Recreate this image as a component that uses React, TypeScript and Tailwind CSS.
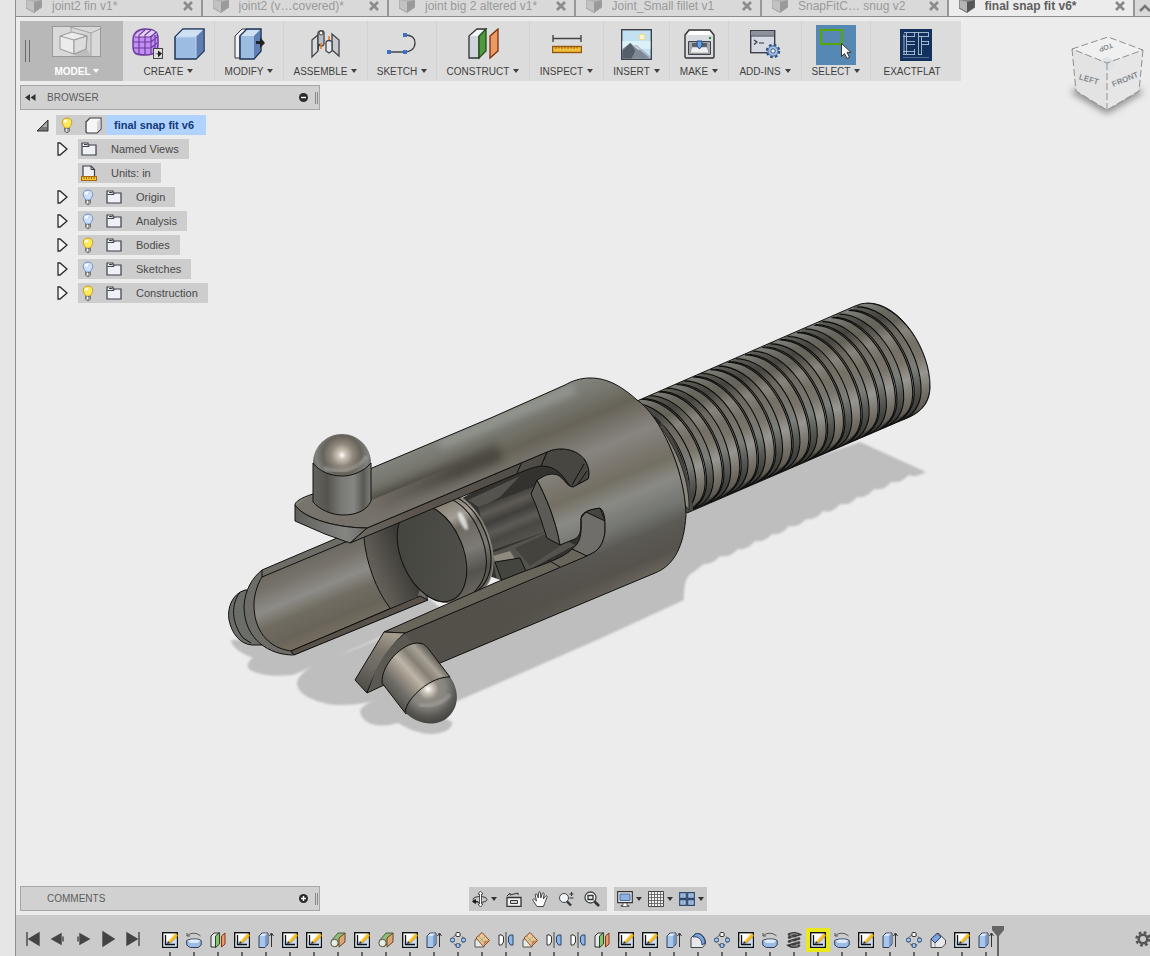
import React from "react";

type SvgProps = {
  w: number;
  h: number;
  children: React.ReactNode;
};

const Svg: React.FC<SvgProps> = ({ w, h, children }) => (
  <svg width={w} height={h} viewBox={`0 0 ${w} ${h}`} fill="none" aria-hidden="true" className="block shrink-0">
    {children}
  </svg>
);

const Caret: React.FC = () => (
  <Svg w={6} h={4}>
    <path d="M0 0h6L3 4z" fill="currentColor" />
  </Svg>
);

/* ---------- document tabs ---------- */

const tabs = [
  { name: "joint2 fin v1*" },
  { name: "joint2 (v…covered)*" },
  { name: "joint big 2 altered v1*" },
  { name: "Joint_Small fillet v1" },
  { name: "SnapFitC… snug v2" },
  { name: "final snap fit v6*", active: true },
];

const TabCube: React.FC<{ active?: boolean }> = ({ active }) => (
  <Svg w={16} h={13}>
    <path d="M0 0h16v7L8 12.500 0 8z" fill={active ? "#8a8a8a" : "#b4b4b4"} />
    <path d="M0 0l8 2v10.500L0 8z" fill={active ? "#b5b5b5" : "#c2c2c2"} />
    <path d="M8 2l8-2v7l-8 5.500z" fill={active ? "#555" : "#9a9a9a"} />
    <path d="M0 0v8l8 4.500L16 7V0" stroke={active ? "#6a6a6a" : "#a2a2a2"} />
  </Svg>
);

const DocumentTabs: React.FC = () => (
  <div className="flex h-[17px] border-b border-[#8e8e8e] bg-[#d9d9d9]">
    {tabs.map((tab) => (
      <div
        key={tab.name}
        className={`flex min-w-0 flex-1 items-start border-r-2 border-[#979797] pl-[10px] pr-2 ${
          tab.active ? "bg-[#ececec]" : "bg-[#d9d9d9]"
        }`}
      >
        <TabCube active={tab.active} />
        <button
          className={`ml-[10px] flex-1 truncate text-left text-[12px] leading-[13px] ${
            tab.active ? "font-bold text-[#5f5f5f]" : "text-[#9a9a9a]"
          }`}
        >
          {tab.name}
        </button>
        <button aria-label={`Close ${tab.name}`} className="pt-px">
          <Svg w={10} h={10}>
            <path d="M1 1l8 8M9 1L1 9" stroke={tab.active ? "#888" : "#8c8c8c"} strokeWidth="2.600" />
          </Svg>
        </button>
      </div>
    ))}
    <button aria-label="More tabs" className="w-[15px] pl-1 pt-px">
      <Svg w={11} h={9}>
        <path d="M1 7l5-5 5 5" stroke="#777" strokeWidth="2.500" />
      </Svg>
    </button>
  </div>
);

/* ---------- ribbon ---------- */

const ModelIcon = (
  <Svg w={49} h={31}>
    <rect x="0.500" y="0.500" width="48" height="30" fill="#d9d9d9" stroke="#999" />
    <path d="M19 1v6M19 7l20 0v23H19z" fill="#d2d2d2" />
    <path d="M19 1v6M18 1l21 6 9-4M39 7v23" stroke="#a2a2a2" />
    <path d="M22 28l13-5 4 7H24z" fill="#bdbdbd" />
    <path d="M8 10l12-4 15 4-1 13-12 5-14-5z" fill="#ececec" stroke="#999" />
    <path d="M8 10l14 4 13-4M22 14v14" stroke="#999" />
    <path d="M22 14l13-4-1 13-12 5z" fill="#dcdcdc" stroke="#999" />
  </Svg>
);

const FormIcon = (
  <Svg w={31} h={32}>
    <path d="M1 12C1 5 6 1 13 1c8 0 13 2 13 9v7c0 7-4 10-12 10C4 27 1 26 1 18z" fill="#c48ff5" stroke="#6b3d9c" strokeWidth="1.500" />
    <path d="M3 9c3-6 8-7 13-7 5 0 8 2 9 4-5 3-14 3-22 3z" fill="#e6cff8" />
    <path d="M1 14h18l6-5M1 20h18l6-5M3 9h15l7-5M7 7v19M13 7v20M19 9v17M7 7l6-5M13 7l6-5M19 9l5-5M23 7v17" stroke="#6b3d9c" strokeWidth="1.200" />
    <rect x="21.500" y="20.500" width="9" height="10" fill="#ddd" stroke="#444" />
    <path d="M23 25.500h3v-3l4 3-4 4v-3" fill="#222" />
  </Svg>
);

const BoxIcon = (
  <Svg w={31} h={32}>
    <path d="M1 9l8-8h21v22l-8 8H1z" fill="#9dbce2" stroke="#1d3558" strokeWidth="1.500" />
    <path d="M1.700 9L9 1.700h20L22 9z" fill="#cfe0f2" />
    <path d="M22 9l7.300-7.300v21L22 30z" fill="#5d7cb0" />
    <path d="M2 9h20v21" stroke="#bdd3ee" />
  </Svg>
);

const ModifyIcon = (
  <Svg w={31} h={32}>
    <path d="M1 8l7-7h5L6 8v22H1z" fill="#f2f2f2" stroke="#333" />
    <path d="M6 8l7-7h14v22l-7 8H6z" fill="#9dbce2" stroke="#1d3558" strokeWidth="1.500" />
    <path d="M7 8l6-6h13l-6 6z" fill="#cfe0f2" />
    <path d="M20 8l6-6v21l-6 7z" fill="#6080b3" />
    <path d="M22 13h4V9l5 6-5 5v-4h-4z" fill="#222" />
  </Svg>
);

const AssembleIcon = (
  <Svg w={29} h={32}>
    <path d="M1 12l6-5v16l-6 6z" fill="#d8dbe1" stroke="#444" strokeWidth="1.300" />
    <path d="M7 5c1-3 6-3 6 0v11c-1 3-4 3-5 0L7 22z" fill="#b9bec8" stroke="#444" strokeWidth="1.300" />
    <circle cx="10" cy="5" r="2" fill="#eee" stroke="#444" />
    <path d="M10 15v6M18 8v6" stroke="#e57a1f" strokeWidth="1.500" />
    <path d="M21 6l7 6v16l-7-6z" fill="#c6cad3" stroke="#444" strokeWidth="1.300" />
    <path d="M15 14c1-2 5-2 6 0v9l-3 2-3-2z" fill="#e5e7eb" stroke="#444" strokeWidth="1.300" />
  </Svg>
);

const SketchIcon = (
  <Svg w={31} h={24}>
    <path d="M2 20h16c5 0 10-3 10-9s-5-8-10-8" stroke="#444" strokeWidth="1.400" />
    <path d="M0 18h4v4H0zM16 18h4v4h-4zM16 1h4v4h-4z" fill="#3d6fd1" />
  </Svg>
);

const ConstructIcon = (
  <Svg w={31} h={32}>
    <path d="M1 8l8-7h9l-7 7v22H1z" fill="#d0d5de" stroke="#333" strokeWidth="1.300" />
    <path d="M2 8l7-6h8l-6 6z" fill="#f5f6f8" />
    <path d="M11 8l7-7v22l-7 7z" fill="#4f9a3f" stroke="#234f1b" strokeWidth="1.300" />
    <path d="M22 8l8-7v22l-8 7z" fill="#ec9a63" stroke="#7c2e0b" strokeWidth="1.300" />
  </Svg>
);

const InspectIcon = (
  <Svg w={30} h={22}>
    <path d="M1 5.500h28M1 2v7M29 2v7" stroke="#444" strokeWidth="1.400" />
    <rect x="0.500" y="13.500" width="29" height="6" fill="#f0bf3c" stroke="#94570c" strokeWidth="1.400" />
    <path d="M4 14v2M7 14v1.500M10 14v2M13 14v1.500M16 14v2M19 14v1.500M22 14v2M25 14v1.500" stroke="#94570c" />
  </Svg>
);

const InsertIcon = (
  <Svg w={31} h={31}>
    <rect x="0.700" y="0.700" width="29.600" height="29.600" fill="#c2e2f3" stroke="#3c4049" strokeWidth="1.400" />
    <path d="M1.400 12h28v8h-28z" fill="#dcf0f8" />
    <circle cx="21" cy="8" r="3" fill="#fff6cf" stroke="#f3d675" />
    <path d="M1.400 20l8-6 8 7 3-1 9 8v1.500h-28z" fill="#7f8896" />
    <path d="M1.400 22l8-8 5 8-4 7.500h-9z" fill="#565d6a" />
    <path d="M13 16l3 0 13 12v1.500z" fill="#b6bcc6" />
  </Svg>
);

const MakeIcon = (
  <Svg w={31} h={30}>
    <path d="M1 6l4-5h21l4 5v22l-1 1H2l-1-1z" fill="#d9dce2" stroke="#333" strokeWidth="1.400" />
    <path d="M3 6l3-4h19l3 4z" fill="#fff" />
    <rect x="25" y="8" width="2" height="2" fill="#178a17" />
    <path d="M4.500 12.500h22v13h-22z" fill="#a4a9b3" stroke="#444" />
    <path d="M8 14h15v6H8z" fill="#5c6068" />
    <path d="M8 18h15l2 6H6z" fill="#eee" stroke="#777" strokeWidth="0.500" />
    <path d="M13 12h5v5l-2.500 3-2.500-3z" fill="#67a5e0" stroke="#224a7c" />
  </Svg>
);

const AddInsIcon = (
  <Svg w={31} h={30}>
    <rect x="0.700" y="1.700" width="24" height="22" fill="#d5d9e2" stroke="#3c4049" strokeWidth="1.400" />
    <path d="M1.400 2.400h22.600v4H1.400z" fill="#8c919c" />
    <path d="M1 7h23" stroke="#3c4049" />
    <path d="M4 11l3 2-3 2.500M9 14h5" stroke="#333" strokeWidth="1.200" />
    <circle cx="23" cy="22" r="6" fill="#a9c3e6" stroke="#2f4e7e" strokeWidth="2.500" strokeDasharray="2.600 2.100" />
    <circle cx="23" cy="22" r="5" fill="#a9c3e6" stroke="#5475a6" />
    <circle cx="23" cy="22" r="2.200" fill="#fff" stroke="#2f4e7e" />
  </Svg>
);

const SelectIcon = (
  <Svg w={40} h={40}>
    <path d="M0 0h40v40H0z" fill="#5688b4" />
    <path d="M5 5h21v14H5z" stroke="#58a600" strokeWidth="2" />
    <path d="M25.500 18.500v13l3-3 2.500 5 2.500-1.200-2.500-5h4z" fill="#fff" stroke="#333" />
  </Svg>
);

const ExactFlatIcon = (
  <Svg w={32} h={32}>
    <path d="M0 0h32v32H0z" fill="#12315c" />
    <path
      d="M4 3.500h24M4 5v20M6.500 4v21M3 7.500h12M7 12.500h8M7 15.500h8M3 22.500h12M3 25.500h12M14.500 3v5M14.500 20v6M18.500 3v23M21.500 7v19M18 7.500h11M22 12.500h7M22 15.500h7M18 25.500h4M28.500 3v5M28.500 12v4"
      stroke="#b9c9de"
      strokeOpacity="0.850"
    />
    <path d="M3 28.500h26" stroke="#4b6c96" />
  </Svg>
);

const ribbon = [
  { label: "CREATE", width: "w-[92px]", icons: [FormIcon, BoxIcon] },
  { label: "MODIFY", width: "w-[69px]", icons: [ModifyIcon] },
  { label: "ASSEMBLE", width: "w-[84px]", icons: [AssembleIcon] },
  { label: "SKETCH", width: "w-[69px]", icons: [SketchIcon] },
  { label: "CONSTRUCT", width: "w-[93px]", icons: [ConstructIcon] },
  { label: "INSPECT", width: "w-[74px]", icons: [InspectIcon] },
  { label: "INSERT", width: "w-[66px]", icons: [InsertIcon] },
  { label: "MAKE", width: "w-[59px]", icons: [MakeIcon] },
  { label: "ADD-INS", width: "w-[73px]", icons: [AddInsIcon] },
  { label: "SELECT", width: "w-[69px]", icons: [SelectIcon] },
];

const Ribbon: React.FC = () => (
  <div className="flex h-15 w-fit bg-[#dcdcdc] text-[10px] text-[#3f3f3f]">
    <div className="flex w-[103px] items-center bg-[#b8b8b8] pl-[5px]">
      <span className="h-[22px] w-[5px] border-x border-[#6a6a6a]" />
      <button className="flex flex-1 flex-col items-center font-bold text-white">
        <span className="flex h-10 items-center">{ModelIcon}</span>
        <span className="flex h-5 items-center gap-[2px]">
          MODEL
          <Caret />
        </span>
      </button>
    </div>
    {ribbon.map((group) => (
      <button key={group.label} className={`flex flex-col items-center border-r border-[#d2d2d2] ${group.width}`}>
        <span className={`flex h-10 items-center gap-[11px] ${group.label === "SELECT" ? "pt-[8px]" : "pt-[6px]"}`}>
          {group.icons.map((icon, i) => (
            <React.Fragment key={i}>{icon}</React.Fragment>
          ))}
        </span>
        <span className="flex h-5 items-center gap-1">
          {group.label}
          <Caret />
        </span>
      </button>
    ))}
    <button className="flex w-[90px] flex-col items-center">
      <span className="flex h-10 items-center pt-2">{ExactFlatIcon}</span>
      <span className="flex h-5 items-center pr-2">EXACTFLAT</span>
    </button>
  </div>
);

/* ---------- browser tree ---------- */

const Bulb: React.FC<{ on?: boolean }> = ({ on }) => (
  <Svg w={12} h={16}>
    <path
      d="M6 1c3 0 4.800 2 4.800 4.500C10.800 8 8.500 9 8.500 11h-5C3.500 9 1.200 8 1.200 5.500 1.200 3 3 1 6 1z"
      fill={on ? "#ffe95c" : "#cfe0fb"}
      stroke={on ? "#c79a1c" : "#7390c2"}
    />
    <circle cx="4.500" cy="4" r="1.500" fill="#fff" />
    <path d="M3.500 11.500h5v2.500l-1.500 1.500H5L3.500 14z" fill="#a5a5a5" stroke="#555" strokeWidth="0.700" />
    <path d="M5.500 11.500v3" stroke="#eee" />
  </Svg>
);

const Folder: React.FC = () => (
  <Svg w={16} h={14}>
    <path d="M1 13V1h6v2h8v10z" fill="#eef0f3" stroke="#3a3f4a" strokeWidth="1.200" />
    <path d="M1.500 4.500h6L8.500 3M3 2.500h3" stroke="#3a3f4a" strokeWidth="1.100" />
  </Svg>
);

const UnitsIcon: React.FC = () => (
  <Svg w={16} h={16}>
    <path d="M2 12V1h8l3.500 3.500V12" fill="#eef0f3" stroke="#3a3f4a" strokeWidth="1.200" />
    <path d="M10 1v3.500h3.500" stroke="#3a3f4a" />
    <rect x="0.500" y="11.500" width="15" height="4" fill="#f4c534" stroke="#a8690f" />
    <path d="M3 12v2M5.500 12v2M8 12v2M10.500 12v2M13 12v2" stroke="#a8690f" />
  </Svg>
);

const Expander: React.FC = () => (
  <Svg w={11} h={14}>
    <path d="M1 1h2l7 6-7 6H1z" fill="#f5f5f5" stroke="#2b2b2b" strokeWidth="1.300" />
  </Svg>
);

const treeRows = [
  { name: "Named Views", kind: "folder" },
  { name: "Units: in", kind: "units" },
  { name: "Origin", kind: "off" },
  { name: "Analysis", kind: "off" },
  { name: "Bodies", kind: "on" },
  { name: "Sketches", kind: "off" },
  { name: "Construction", kind: "on" },
];

const PanelHeader: React.FC<{ title: string; open: boolean }> = ({ title, open }) => (
  <div className="flex h-[25px] w-75 items-center border border-[#a6a6a6] bg-[#d1d1d1] pr-px text-[10px] text-[#5c5c5c]">
    <span className="w-[26px] pl-1">
      {open && (
        <Svg w={11} h={7}>
          <path d="M5 0v7L0 3.500zM10.500 0v7l-5-3.500z" fill="#333" />
        </Svg>
      )}
    </span>
    <span className="flex-1">{title}</span>
    <button aria-label={open ? `Collapse ${title}` : `Expand ${title}`}>
      <Svg w={9} h={9}>
        <circle cx="4.500" cy="4.500" r="4.500" fill="#2c2c2c" />
        <path d={open ? "M2 4.500h5" : "M2 4.500h5M4.500 2v5"} stroke="#fff" strokeWidth="1.400" />
      </Svg>
    </button>
    <span className="ml-[7px] h-3 w-[3px] border-x border-[#888]" />
  </div>
);

const BrowserTree: React.FC = () => (
  <ul className="mt-[5px] flex w-75 flex-col gap-1 text-[11px] text-[#4a4a4a]">
    <li className="flex h-5 items-center pl-4">
      <button aria-label="Collapse root" className="w-5">
        <Svg w={13} h={13}>
          <path d="M12 1v11H1z" fill="#777" stroke="#333" />
          <path d="M11 3v5H6z" fill="#aaa" />
        </Svg>
      </button>
      <span className="flex h-5 w-[50px] items-center justify-between bg-[#cdcdcd] pl-[5px] pr-1">
        <Bulb on />
        <Svg w={17} h={17}>
          <path d="M1 5l4-4h11v11l-4 4H2l-1-1z" fill="#f6f6f6" stroke="#3a3f4a" strokeWidth="1.200" />
          <path d="M12 5l3.500-3.500V12L12 15.500z" fill="#d5d5d9" />
        </Svg>
      </span>
      <span className="flex h-5 items-center bg-[#b0d2ff] pl-2 pr-3 font-bold text-[#123a78]">final snap fit v6</span>
    </li>
    {treeRows.map((row) => (
      <li key={row.name} className="flex h-5 items-center pl-[37px]">
        <span className="w-[21px]">
          {row.kind !== "units" && (
            <button aria-label={`Expand ${row.name}`} className="block">
              <Expander />
            </button>
          )}
        </span>
        <span className="flex h-5 items-center bg-[#cdcdcd] pr-[10px]">
          {row.kind === "folder" && <span className="w-[33px] pl-[3px]"><Folder /></span>}
          {row.kind === "units" && <span className="w-[33px] pl-[3px]"><UnitsIcon /></span>}
          {(row.kind === "on" || row.kind === "off") && (
            <span className="flex w-[58px] items-center gap-3 pl-1">
              <Bulb on={row.kind === "on"} />
              <Folder />
            </span>
          )}
          {row.name}
        </span>
      </li>
    ))}
  </ul>
);

/* ---------- 3D model ---------- */

const THREAD_ARC = "C900 303 931 350 930 388C929 408 916 415 900 421";
const THREAD_PITCH = 17.3;

const SLEEVE =
  "M367 528L547 452C560 446 577 449 585 460C589 467 590 474 588 479L573 487C566 487 563 474 553 474C545 474 542 478 537 480C545 495 556 520 560 545L575 539C583 535 580 524 581 518C582 511 592 509 600 508C606 512 605 525 605 532C603 548 595 553 586 556L405 633C390 645 376 668 367 693L382 686L440 663L655 573C675 565 684 545 686 515C685 470 660 415 637 400C615 380 600 378 590 378C580 378 572 381 565 385L493 417L372 468L313 494C300 498 295 502 295 505C305 520 340 528 367 528z";

const Thread: React.FC = () => {
  const turns = Array.from({ length: 15 }, (_, i) => i * THREAD_PITCH);
  const arc = (dx: number) => (
    <path d={`M866 303${THREAD_ARC}`} transform={`translate(${-dx} ${dx * 0.428})`} />
  );
  return (
    <g clipPath="url(#threadClip)" fill="none">
      <path d="M600 300h340v240H600z" fill="url(#threadShade)" />
      {turns.map((dx) => (
        <g key={dx}>
          <g stroke="url(#flankShade)" strokeWidth="6.500">{arc(dx + 12.500)}</g>
          <g stroke="#0d0d0c" strokeWidth="1.100">
            {arc(dx)}
            {arc(dx + 9)}
            {arc(dx + 15.800)}
          </g>
        </g>
      ))}
    </g>
  );
};

const Model: React.FC = () => (
  <svg
    width="720"
    height="460"
    viewBox="220 290 720 460"
    role="img"
    aria-label="final snap fit v6"
    className="absolute left-[204px] top-[273px]"
  >
    <defs>
      <clipPath id="threadClip">
        <path d={`M637 401L855 306Q861 303 868 303${THREAD_ARC}L686 513L640 470z`} />
      </clipPath>
      <clipPath id="sleeveClip">
        <path d={SLEEVE} />
      </clipPath>
      <filter id="soft" x="-5%" y="-5%" width="110%" height="110%">
        <feGaussianBlur stdDeviation="1" />
      </filter>
      <filter id="blur4" x="-50%" y="-50%" width="200%" height="200%">
        <feGaussianBlur stdDeviation="4" />
      </filter>
      <linearGradient id="shell" gradientUnits="userSpaceOnUse" x1="510" y1="412" x2="589" y2="602">
        <stop offset="0" stopColor="#80827b" />
        <stop offset="0.070" stopColor="#77776f" />
        <stop offset="0.170" stopColor="#676358" />
        <stop offset="0.330" stopColor="#888580" />
        <stop offset="0.420" stopColor="#7c7870" />
        <stop offset="0.500" stopColor="#736f63" />
        <stop offset="0.600" stopColor="#8a8a85" />
        <stop offset="0.720" stopColor="#737571" />
        <stop offset="0.800" stopColor="#5c5a55" />
        <stop offset="0.920" stopColor="#56524c" />
        <stop offset="1" stopColor="#6b675f" />
      </linearGradient>
      <linearGradient id="plateTop" gradientUnits="userSpaceOnUse" x1="370" y1="510" x2="460" y2="473">
        <stop offset="0" stopColor="#77736b" stopOpacity="0.900" />
        <stop offset="1" stopColor="#77736b" stopOpacity="0" />
      </linearGradient>
      <linearGradient id="lowDark" gradientUnits="userSpaceOnUse" x1="500" y1="625" x2="640" y2="566">
        <stop offset="0" stopColor="#53504a" />
        <stop offset="1" stopColor="#53504a" stopOpacity="0" />
      </linearGradient>
      <linearGradient id="threadShade" gradientUnits="userSpaceOnUse" x1="750" y1="352" x2="797" y2="465">
        <stop offset="0" stopColor="#7d807b" />
        <stop offset="0.120" stopColor="#6a675e" />
        <stop offset="0.220" stopColor="#66635a" />
        <stop offset="0.320" stopColor="#88847c" />
        <stop offset="0.450" stopColor="#757065" />
        <stop offset="0.560" stopColor="#79756a" />
        <stop offset="0.700" stopColor="#979692" />
        <stop offset="0.850" stopColor="#767269" />
        <stop offset="1" stopColor="#57534c" />
      </linearGradient>
      <linearGradient id="flankShade" gradientUnits="userSpaceOnUse" x1="750" y1="352" x2="797" y2="465">
        <stop offset="0" stopColor="#5d5c56" />
        <stop offset="0.150" stopColor="#45443f" />
        <stop offset="0.300" stopColor="#6c685f" />
        <stop offset="0.500" stopColor="#77756c" />
        <stop offset="0.640" stopColor="#7a7d79" />
        <stop offset="0.780" stopColor="#5a5b57" />
        <stop offset="0.900" stopColor="#42423e" />
        <stop offset="1" stopColor="#3a3935" />
      </linearGradient>
      <linearGradient id="trough" gradientUnits="userSpaceOnUse" x1="310" y1="552" x2="344" y2="634">
        <stop offset="0" stopColor="#6a675f" />
        <stop offset="0.200" stopColor="#77736b" />
        <stop offset="0.420" stopColor="#8e8c88" />
        <stop offset="0.600" stopColor="#706c61" />
        <stop offset="0.800" stopColor="#69645a" />
        <stop offset="1" stopColor="#797062" />
      </linearGradient>
      <linearGradient id="troughEnd" gradientUnits="userSpaceOnUse" x1="368" y1="580" x2="410" y2="562">
        <stop offset="0" stopColor="#2f2e2a" stopOpacity="0.050" />
        <stop offset="1" stopColor="#2f2e2a" stopOpacity="0.800" />
      </linearGradient>
      <linearGradient id="pin" x1="0" x2="1" y1="0" y2="0">
        <stop offset="0" stopColor="#63635e" />
        <stop offset="0.250" stopColor="#55544e" />
        <stop offset="0.500" stopColor="#7b7c78" />
        <stop offset="0.700" stopColor="#858682" />
        <stop offset="0.870" stopColor="#5a5954" />
        <stop offset="1" stopColor="#7f7d77" />
      </linearGradient>
      <linearGradient id="pin2" gradientUnits="userSpaceOnUse" x1="392" y1="700" x2="436" y2="660">
        <stop offset="0" stopColor="#4f4e49" />
        <stop offset="0.220" stopColor="#6e6d68" />
        <stop offset="0.420" stopColor="#a09689" />
        <stop offset="0.550" stopColor="#bdb5a9" />
        <stop offset="0.720" stopColor="#857f73" />
        <stop offset="0.880" stopColor="#a9a296" />
        <stop offset="1" stopColor="#6d6960" />
      </linearGradient>
      <radialGradient id="dome" gradientUnits="userSpaceOnUse" cx="342" cy="455" r="32">
        <stop offset="0" stopColor="#ffffff" />
        <stop offset="0.120" stopColor="#cdc6ba" />
        <stop offset="0.350" stopColor="#8f877b" />
        <stop offset="0.600" stopColor="#67635b" />
        <stop offset="0.820" stopColor="#7f827e" />
        <stop offset="1" stopColor="#5a5a55" />
      </radialGradient>
      <radialGradient id="dome2" gradientUnits="userSpaceOnUse" cx="428" cy="689" r="36">
        <stop offset="0" stopColor="#ffffff" />
        <stop offset="0.130" stopColor="#cdc6ba" />
        <stop offset="0.300" stopColor="#8f8b82" />
        <stop offset="0.500" stopColor="#85837d" />
        <stop offset="0.750" stopColor="#5c5a55" />
        <stop offset="1" stopColor="#3f3e3a" />
      </radialGradient>
      <linearGradient id="rim" gradientUnits="userSpaceOnUse" x1="445" y1="498" x2="445" y2="608">
        <stop offset="0" stopColor="#8a8475" />
        <stop offset="0.120" stopColor="#857f73" />
        <stop offset="0.280" stopColor="#a39e94" />
        <stop offset="0.380" stopColor="#6d6961" />
        <stop offset="0.600" stopColor="#7d7b75" />
        <stop offset="0.800" stopColor="#55534d" />
        <stop offset="1" stopColor="#6a675f" />
      </linearGradient>
      <linearGradient id="face" x1="0" x2="1" y1="0" y2="1">
        <stop offset="0" stopColor="#43433e" />
        <stop offset="1" stopColor="#52514c" />
      </linearGradient>
      <linearGradient id="rod" gradientUnits="userSpaceOnUse" x1="500" y1="497" x2="519" y2="543">
        <stop offset="0" stopColor="#3c3a36" />
        <stop offset="0.200" stopColor="#5e5b55" />
        <stop offset="0.400" stopColor="#413f3b" />
        <stop offset="0.600" stopColor="#5d5b56" />
        <stop offset="0.750" stopColor="#4a4843" />
        <stop offset="1" stopColor="#57544d" />
      </linearGradient>
      <linearGradient id="strip" gradientUnits="userSpaceOnUse" x1="350" y1="540" x2="545" y2="460">
        <stop offset="0" stopColor="#6d6a64" />
        <stop offset="0.300" stopColor="#5d564f" />
        <stop offset="1" stopColor="#4d4a45" />
      </linearGradient>
      <linearGradient id="plateSide" x1="0" x2="1" y1="0" y2="0">
        <stop offset="0" stopColor="#5f5f5a" />
        <stop offset="0.700" stopColor="#858682" />
        <stop offset="1" stopColor="#6a6a65" />
      </linearGradient>
      <linearGradient id="chamfer" x1="0.600" x2="0.300" y1="0" y2="1">
        <stop offset="0" stopColor="#a59c8e" />
        <stop offset="0.300" stopColor="#7c766c" />
        <stop offset="0.600" stopColor="#6d6a63" />
        <stop offset="1" stopColor="#4d4b46" />
      </linearGradient>
    </defs>

    {/* ground shadows */}
    <g fill="#bebebe" filter="url(#soft)">
      <path d="M660 510L860 442L926 472Q915 478 909 475Q900 484 891 482Q884 491 874 489Q866 499 857 497Q850 506 840 504Q832 514 823 511Q815 521 806 519Q798 528 789 526Q781 536 772 534Q764 543 755 541Q747 551 738 549Q730 558 720 556Q712 565 704 564L692 573Q683 578 684 600L597 640L455 702L430 700L430 664L650 560z" />
      <path d="M231 640Q232 650 253 658Q244 664 250 670Q265 678 293 675L390 633L440 608L420 590L280 640z" />
      <path d="M297 683C300 668 325 660 350 651L420 622L400 660L392 697C370 703 345 707 328 704C310 700 297 693 297 683z" />
      <path d="M360 711C362 724 377 729 398 723C407 728 418 734 432 734C445 733 453 729 452 722L410 700L390 697C375 700 362 704 360 711z" />
    </g>

    <Thread />
    <path d="M637 401L855 306Q861 303 868 303C900 303 931 350 930 388C929 408 916 415 900 421L687 513" fill="none" stroke="#151514" />
    <path d="M637 401C652 405 690 450 693 510L685 513L660 420z" fill="#4a4843" />
    <path d="M641 405C668 430 690 470 689 510L685 505C680 460 665 430 641 405z" fill="#8a867d" stroke="#1a1a18" strokeWidth="0.800" />

    {/* far half of the sleeve */}
    <g stroke="#111110" strokeWidth="1" strokeLinejoin="round">
      <path d="M245 590C232 594 227 608 229 620C232 634 240 644 252 645L264 645L262 590z" fill="#6b6d69" />
      <path d="M240 592C231 604 231 622 243 638L251 643" fill="none" />
      <path d="M262 570L370 524L430 560L427 600L293 655C270 655 244 640 244 606C245 590 252 578 262 570z" fill="#6e6c66" />
      <path d="M262 577L360 536L430 550L417 597L291 651C268 648 253 630 254 602C255 592 258 583 262 577z" fill="url(#trough)" />
      <path d="M262 570V577M291 651L294 655" fill="none" />
      <path d="M291 651L420 596L428 600L294 655z" fill="#57514a" />
    </g>
    <path d="M364 538C366 562 376 590 390 608L417 597L440 540L440 505L395 524z" fill="#6f6b63" />
    <path d="M364 538C366 562 376 590 390 608L417 597L440 540L440 505L395 524z" fill="url(#troughEnd)" />
    <path d="M364 538C366 562 376 590 390 608" fill="none" stroke="#111110" />

    {/* slot interior */}
    <path d="M440 510L547 452L590 460L606 520L600 552L498 582L470 560z" fill="#33322e" />
    <path d="M468 500L520 476L500 497L480 508z" fill="#55534d" />
    <path d="M492 553L548 531L575 545L525 572L497 582z" fill="#55534d" />
    <path d="M515 548L548 533L562 545L530 566z" fill="#45433e" />
    <path d="M478 507L536 486L548 531L490 551z" fill="url(#rod)" />
    <path d="M493 556L510 551L515 559L495 562z" fill="#8f897e" />
    <path d="M495 562L520 558L526 571L502 581z" fill="#454540" stroke="#111110" />
    <path d="M492 577L503 581L494 585z" fill="#ececec" />

    {/* round end of the inner shaft */}
    <g transform="rotate(-22.700 432 553)">
      <ellipse cx="459" cy="553" rx="32" ry="54" fill="url(#rim)" />
      <ellipse cx="459" cy="553" rx="32" ry="54" fill="none" stroke="#8f8b83" />
      <path d="M447 499C477 499 489 525 489 553C489 581 477 607 447 607z" fill="url(#rim)" stroke="#111110" />
      <path d="M442 499C472 499 484 525 484 553C484 581 472 607 442 607z" fill="url(#rim)" stroke="#111110" />
      <ellipse cx="447" cy="553" rx="31" ry="54" fill="url(#rim)" />
      <ellipse cx="436" cy="553" rx="35" ry="54" fill="url(#rim)" />
      <ellipse cx="432" cy="553" rx="31" ry="51" fill="url(#face)" stroke="#111110" />
    </g>
    <ellipse cx="463" cy="521" rx="3" ry="10" fill="#fff" opacity="0.700" filter="url(#soft)" transform="rotate(-25 463 521)" />

    {/* walls of the slot ends */}
    <g stroke="#111110" strokeWidth="1" strokeLinejoin="round">
      <path d="M547 452C560 446 577 449 585 460C589 467 590 474 588 479L573 487C566 486 563 466 541 466z" fill="#474641" />
      <path d="M584 464L572 485M587 471L578 484" fill="none" />
      <path d="M581 518C582 511 592 509 600 508C606 512 605 525 605 532C603 548 595 553 586 556L572 549C580 543 582 536 581 518z" fill="#6f6e68" />
      <path d="M581 518C582 511 592 509 600 508L605 521L586 512z" fill="#46453f" />
      <path d="M350 543L367 528L547 452L541 466C530 468 524 471 519 473z" fill="url(#strip)" />
      <path d="M522 462L517 473" fill="none" />
      <path d="M537 480L531 494C538 508 542 524 547 538L560 545C556 520 545 495 537 480z" fill="#5c5b56" />
    </g>

    {/* near half of the sleeve */}
    <path d={SLEEVE} fill="url(#shell)" />
    <g clipPath="url(#sleeveClip)">
      <path d="M372 505L500 452" stroke="#35332d" strokeWidth="18" opacity="0.550" filter="url(#blur4)" />
      <path d="M297 506C304 498 320 490 330 488L372 500L480 455L500 472L367 528C340 528 306 519 297 506z" fill="url(#plateTop)" />
      <path d="M405 634L587 557L660 530L680 564L440 664L382 686L366 694C377 668 390 646 405 634z" fill="url(#lowDark)" />
      <path d="M440 445L575 388" stroke="#a9ada8" strokeWidth="10" opacity="0.550" filter="url(#blur4)" />
    </g>
    <path d={SLEEVE} fill="none" stroke="#111110" strokeLinejoin="round" />

    <g stroke="#111110" strokeWidth="1" strokeLinejoin="round">
      <path d="M295 505C305 520 340 528 367 528L350 543L325 534L295 521z" fill="url(#plateSide)" />
      <path d="M572 549L587 556L405 633L384 632L497 582L525 571C545 564 565 557 572 549z" fill="#69655a" />
      <path d="M548 560L560 567" fill="none" />
      <path d="M384 632L405 633C390 645 376 668 367 693L355 680z" fill="url(#chamfer)" />
      <path d="M405 634C391 644 382 657 375 672L368 692L382 685C381 665 398 648 412 643z" fill="#5c5952" stroke="none" />
    </g>

    {/* upper pin */}
    <path d="M313 463V502C320 510 332 515 343 515C355 515 367 511 371 501V463z" fill="url(#pin)" stroke="#111110" />
    <path d="M313 463C313 447 326 434 342 434C358 434 371 447 371 463C363 472 352 476 342 476C330 476 319 471 313 463z" fill="url(#dome)" />
    <path d="M324 468C340 474 358 470 367 456" fill="none" stroke="#a2a5a1" strokeWidth="4" opacity="0.600" filter="url(#soft)" />
    <path d="M313 463C319 471 330 476 342 476C352 476 363 472 371 463" fill="none" stroke="#111110" />

    {/* lower pin */}
    <path d="M382 683C381 665 402 643 418 643Q424 643 427 647L450 677L406 714z" fill="url(#pin2)" stroke="#111110" />
    <path d="M405 712C407 697 432 676 450 677C458 688 460 703 451 714C440 728 418 726 405 712z" fill="url(#dome2)" />
    <path d="M419 705C430 707 445 703 450 694" fill="none" stroke="#aaa9a3" strokeWidth="4" opacity="0.500" filter="url(#soft)" />
    <path d="M405 712C407 697 432 676 450 677" fill="none" stroke="#111110" />
  </svg>
);

const ViewCube: React.FC = () => (
  <svg width="84" height="88" viewBox="1064 33 84 88" aria-label="View cube" role="img" className="absolute right-[2px] top-4">
    <defs>
      <filter id="cubeShadow" x="-30%" y="-30%" width="160%" height="160%">
        <feGaussianBlur stdDeviation="3.500" />
      </filter>
    </defs>
    <path d="M1070 92L1107 76L1144 92L1107 114z" fill="#777" opacity="0.800" filter="url(#cubeShadow)" />
    <path d="M1072 49L1108 37L1143 50L1107 63z" fill="#f0f0f0" />
    <path d="M1072 49L1107 63V110L1076 91z" fill="#e3e3e3" />
    <path d="M1107 63L1143 50L1139 91L1107 110z" fill="#e6e6e6" />
    <path d="M1100 60l7-3 7 3v8l-7 4-7-4z" fill="#dfe3e7" />
    <path
      d="M1072 49L1108 37L1143 50L1107 63zM1072 49L1076 91L1107 110L1139 91L1143 50M1107 63V110"
      fill="none"
      stroke="#8f8f8f"
      strokeDasharray="7 3"
    />
    <g fill="#868b92" fontSize="8" fontWeight="bold" textAnchor="middle" fontFamily="Liberation Sans, sans-serif">
      <text x="1089" y="82" transform="rotate(16 1089 79)">LEFT</text>
      <text x="1125" y="82" transform="rotate(-22 1125 79)">FRONT</text>
      <text x="1106" y="51" fontSize="7" transform="rotate(160 1106 48)">TOP</text>
    </g>
  </svg>
);

/* ---------- navigation bar ---------- */

const NavButton: React.FC<{ label: string; caret?: boolean; children: React.ReactNode }> = ({ label, caret, children }) => (
  <button aria-label={label} className="flex items-center gap-[3px]">
    <Svg w={16} h={16}>{children}</Svg>
    {caret && <Caret />}
  </button>
);

const NavigationBar: React.FC = () => (
  <div className="flex h-6 gap-[7px] text-[#333]">
    <div className="flex items-center gap-[9px] bg-[#c8c8c8] px-[3px]">
      <NavButton label="Orbit" caret>
        <ellipse cx="8" cy="8.500" rx="7" ry="3" stroke="#333" />
        <path d="M8.500 0l2.500 3H9.500v10H11l-2.500 3L6 13h1.500V3H6z" fill="#fff" stroke="#333" strokeWidth="0.800" />
        <path d="M0.500 10.500l3-2v4zM3 10.500h3" fill="#111" stroke="#111" strokeWidth="0.800" />
      </NavButton>
      <div className="flex items-center gap-[10px]">
        <NavButton label="Look at">
          <path d="M1 6.500h14v9H1z" fill="#f0f0f0" stroke="#333" strokeWidth="1.300" />
          <path d="M4.500 9.500h7v3h-7z" fill="#d0d4dc" stroke="#333" />
          <path d="M1 5l3-3v2l8-2v2" stroke="#333" />
        </NavButton>
        <NavButton label="Pan">
          <path
            d="M5 15.500L1 9.500c-.7-1.500 1-2 2-.8L4.500 10 3.200 4c0-1.500 1.600-1.500 2 0L6.300 7 6.500 2c.2-1.500 1.800-1.500 2 0l.3 5L10.300 2.500c.6-1.200 2-.8 1.800.6L11.300 8 13.500 5.200c.8-1 2-.4 1.600.8L12.500 12.500l-1 3z"
            fill="#fff"
            stroke="#333"
            strokeWidth="0.900"
          />
        </NavButton>
        <NavButton label="Zoom">
          <circle cx="6" cy="7" r="4.500" fill="#eef4f7" stroke="#444" />
          <path d="M9 10.500l4 4" stroke="#333" strokeWidth="2.400" />
          <path d="M13.500 1v4M11.500 3h4M11.500 7h4" stroke="#333" />
        </NavButton>
        <span className="pr-1">
          <NavButton label="Fit">
            <circle cx="6.500" cy="6.500" r="5.500" fill="#eef4f7" stroke="#444" strokeWidth="1.300" />
            <path d="M4 4.500h5v4H4z" stroke="#333" strokeWidth="1.300" />
            <path d="M10.500 10.500l4.500 4.500" stroke="#333" strokeWidth="2.600" />
          </NavButton>
        </span>
      </div>
    </div>
    <div className="flex items-center gap-[6px] bg-[#c8c8c8] px-[3px]">
      <NavButton label="Display settings" caret>
        <path d="M0.700 0.700h14.600v11H0.700z" fill="#eee" stroke="#333" strokeWidth="1.200" />
        <path d="M3 3h10v6.500H3z" fill="#8fb2e0" stroke="#4a6b9c" />
        <path d="M6 12h4v2.500h2v1H4v-1h2z" fill="#fff" stroke="#333" strokeWidth="0.700" />
      </NavButton>
      <NavButton label="Grid and snaps" caret>
        <path d="M0.500 0.500h15v15H0.500z" fill="#f2f2f2" stroke="#444" />
        <path d="M3.500 0v16M6.500 0v16M9.500 0v16M12.500 0v16M0 3.500h16M0 6.500h16M0 9.500h16M0 12.500h16" stroke="#555" strokeWidth="0.800" />
      </NavButton>
      <NavButton label="Viewports" caret>
        <path d="M0.700 1.700h6.600v5.600H0.700zM8.700 1.700h6.600v5.600H8.700zM0.700 8.700h6.600v5.600H0.700zM8.700 8.700h6.600v5.600H8.700z" fill="#a8c4e8" stroke="#2f4668" strokeWidth="1.200" />
        <path d="M3 3.500h2v2H3zM11 3.500h2v2h-2zM3 10.500h2v2H3zM11 10.500h2v2h-2z" stroke="#86a5d0" strokeWidth="0.800" />
      </NavButton>
    </div>
  </div>
);

/* ---------- timeline ---------- */

const featureIcons: Record<string, React.ReactNode> = {
  sketch: (
    <>
      <rect x="0.700" y="0.700" width="14.600" height="14.600" fill="#fff" stroke="#111" strokeWidth="1.400" />
      <path d="M1.500 10L14.500 6v8.500h-13z" fill="#c6dcf5" />
      <path d="M3.500 3v9.500H13" stroke="#111" strokeWidth="1.300" />
      <path d="M6 10L13.500 1.500l2.500 2L8.500 11z" fill="#fbb91d" stroke="#a8701a" strokeWidth="0.500" />
      <path d="M6.500 9.500L13.500 2" stroke="#ffe66b" />
      <path d="M5 12l1-2.500L8 11z" fill="#222" />
    </>
  ),
  revolve: (
    <>
      <path d="M0.700 8.500l4-1.500h7l3.500 1.500v4.500l-3 2.500h-8L0.700 13z" fill="#9dbce4" stroke="#2d3f5c" />
      <path d="M1.500 8.800l3.500-1.300h6.500l3 1.300L11.500 11h-7z" fill="#dfe9f6" />
      <path d="M1.500 3.500C5 0.500 11 0.500 14.500 4M1 1v3h3" stroke="#555" />
    </>
  ),
  plane: (
    <>
      <path d="M1 4l3-3h5L6 4v11H1z" fill="#e4e6ea" stroke="#333" />
      <path d="M5.500 4l4-3.500v11.500l-4 3.500z" fill="#8cbf72" stroke="#234f1b" />
      <path d="M11.500 4l3.500-3v11l-3.500 3z" fill="#ee9a68" stroke="#8a3510" />
    </>
  ),
  extrude: (
    <>
      <path d="M1 4l3-3h6v11l-3 3.500H1z" fill="#a9c5ea" stroke="#2d3f5c" />
      <path d="M7 4l2.500-2.500v10.500L7 15z" fill="#7a9bca" />
      <path d="M1.500 4l3-2.500H9L6.500 4z" fill="#dce8f7" />
      <path d="M13.500 15V2M11.500 4l2-3 2 3" stroke="#333" />
    </>
  ),
  loft: (
    <>
      <path d="M1 9L8 1h7l-4 9-5 5z" fill="#8fbb7d" stroke="#4b6340" />
      <path d="M9 6l6-5v9l-6 5z" fill="#dba673" stroke="#6d4521" />
      <circle cx="4.500" cy="11" r="3.700" fill="#e3efe0" stroke="#555" />
    </>
  ),
  pattern: (
    <>
      <circle cx="8" cy="8" r="5.500" stroke="#555" strokeDasharray="3 2" />
      <rect x="6" y="0.500" width="4" height="4" rx="1" fill="#fff" stroke="#333" />
      <rect x="0.500" y="6" width="4" height="4" rx="1.500" fill="#a3c2ea" stroke="#27466f" />
      <rect x="11.500" y="6" width="4" height="4" rx="1.500" fill="#a3c2ea" stroke="#27466f" />
      <rect x="6" y="11.500" width="4" height="4" rx="1.500" fill="#a3c2ea" stroke="#27466f" />
    </>
  ),
  split: (
    <>
      <path d="M1 8l6-4 3 5v6H1z" fill="#e9e9e9" stroke="#555" />
      <path d="M2 6l6-5.500 7.500 8-6 6z" fill="#f2c4a2" stroke="#8a4a1c" />
      <path d="M10 9l5-1-5.500 6z" fill="#c48a5c" />
      <path d="M5 10l7-6M4.500 4l6 7" stroke="#6fae4c" strokeDasharray="2 1" />
    </>
  ),
  mirror: (
    <>
      <path d="M1 3h3l1.500 2v5L3.500 13H1z" fill="#fff" stroke="#333" />
      <path d="M15 3h-3l-1.500 2v5l2 3H15z" fill="#8fb5e6" stroke="#27466f" />
      <path d="M8 0v16" stroke="#444" />
    </>
  ),
  fillet: (
    <>
      <path d="M1 6l4-4c6-2 10 3 10.500 8v2l-3 3.500H1z" fill="#e6e8ec" stroke="#444" />
      <path d="M5 2c5-2 10 3 10 9l-3 2c0-6-4-9-9-8z" fill="#7fa6dc" stroke="#27466f" />
    </>
  ),
  chamfer: (
    <>
      <path d="M1 7l7-6 7.500 7v4L12 15.500H1z" fill="#e6e8ec" stroke="#444" />
      <path d="M1 7l6-5.500L11 5l-6 6z" fill="#7fa6dc" stroke="#27466f" />
      <path d="M5 11v4" stroke="#999" />
    </>
  ),
  coil: (
    <>
      <path d="M3 2.500c3-1.500 7-1.500 10 0L3 5.500M13 6.500L3 9.500M13 10.500L3 13.500c3 2 8 1.500 10 0" stroke="#3d3d3d" strokeWidth="2.600" strokeLinecap="round" />
      <path d="M4 2.500c3-1 5-1 8 0M5 5l7 1M5 9l7 1M5 13.500c2 1 5 1 7 0" stroke="#9a9a9a" strokeWidth="0.900" />
    </>
  ),
};

const features =
  "sketch revolve plane sketch extrude sketch sketch loft sketch loft sketch extrude pattern split mirror split mirror mirror plane sketch sketch extrude fillet pattern sketch revolve coil sketch revolve sketch extrude pattern chamfer sketch extrude".split(
    " "
  );

const SELECTED_FEATURE = 27;

const playback = [
  { label: "Go to start", d: "M2 1v14M14 2v12L4 8z" },
  { label: "Step back", d: "M11 3v10L2 8zM13 5.500v5" },
  { label: "Step forward", d: "M5 3v10l9-5zM3 5.500v5" },
  { label: "Play", d: "M3 1v14l11-7z" },
  { label: "Go to end", d: "M2 2v12l10-6zM14 1v14" },
];

const Timeline: React.FC = () => (
  <footer className="flex h-[41px] shrink-0 bg-[#cbcbcb] pl-1">
    <div className="flex h-12 items-center">
      {playback.map((button) => (
        <button key={button.label} aria-label={button.label} className="flex w-[25px] justify-center">
          <Svg w={16} h={16}>
            <path d={button.d} fill="#444" stroke="#444" strokeWidth="1.400" />
          </Svg>
        </button>
      ))}
    </div>
    <ol className="ml-[13px] flex items-end">
      {features.map((feature, i) => (
        <li key={i} className="flex flex-col items-center">
          <button
            aria-label={`${feature} ${i + 1}`}
            className={`flex size-6 items-center justify-center ${i === SELECTED_FEATURE ? "bg-[#e8e81c]" : ""}`}
          >
            <Svg w={16} h={16}>{featureIcons[feature]}</Svg>
          </button>
          <span className="h-1 w-[2px] bg-[#666]" />
        </li>
      ))}
    </ol>
    <span className="-ml-[6px] self-end">
      <Svg w={12} h={30}>
        <path d="M0 0h12v4L7 10v20H5V10L0 4z" fill="#666" />
      </Svg>
    </span>
    <button aria-label="Timeline settings" className="ml-auto h-12">
      <Svg w={15} h={16}>
        <circle cx="8" cy="8" r="6.500" stroke="#555" strokeWidth="2.500" strokeDasharray="2.700 2.400" />
        <circle cx="8" cy="8" r="4.300" stroke="#555" strokeWidth="2.500" />
      </Svg>
    </button>
  </footer>
);

const App: React.FC = () => (
  <div className="flex min-h-screen bg-[#e6e6e6] font-['Liberation_Sans',Arial,sans-serif]">
    <div className="w-4 shrink-0 border-r border-[#8e8e8e]" />
    <div className="flex min-w-0 flex-1 flex-col bg-[#ececec]">
      <DocumentTabs />
      <main className="relative flex flex-1 flex-col p-1">
        <Model />
        <ViewCube />
        <div className="relative flex flex-1 flex-col items-start">
          <Ribbon />
          <div className="mt-1">
            <PanelHeader title="BROWSER" open />
            <BrowserTree />
          </div>
          <div className="mt-auto flex items-end">
            <PanelHeader title="COMMENTS" open={false} />
            <div className="ml-[149px]">
              <NavigationBar />
            </div>
          </div>
        </div>
      </main>
      <Timeline />
    </div>
  </div>
);

export default App;
